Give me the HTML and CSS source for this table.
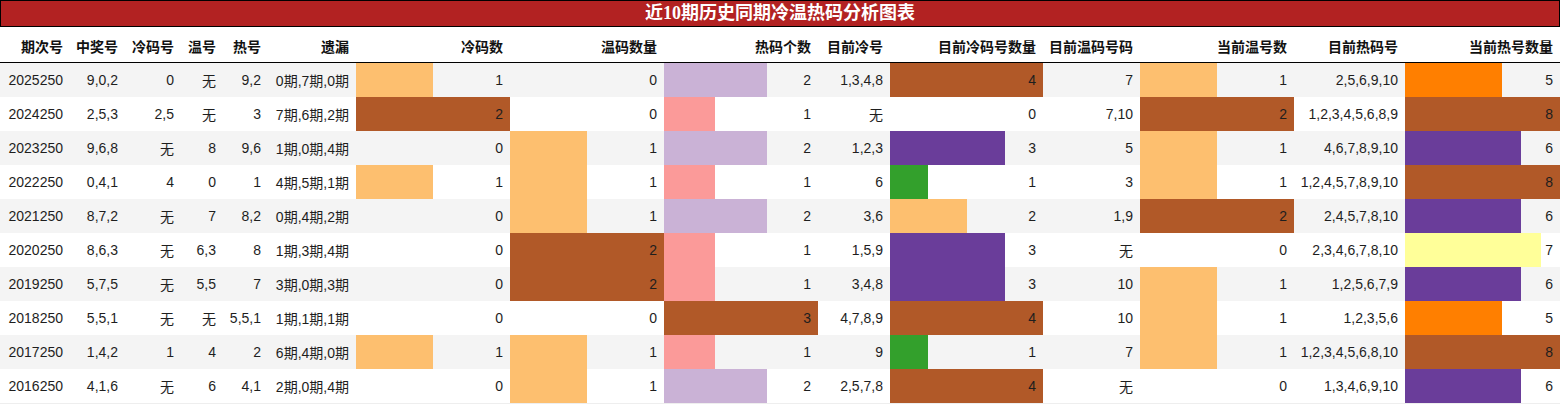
FILE: index.html
```html
<!DOCTYPE html>
<html lang="zh">
<head>
<meta charset="utf-8">
<title>近10期历史同期冷温热码分析图表</title>
<link rel="stylesheet" href="styles.css">
</head>
<body>
<div class="chart">
  <div class="title">近10期历史同期冷温热码分析图表</div>
  <table class="grid">
    <colgroup>
      <col class="w70"><col class="w55"><col class="w56"><col class="w42"><col class="w45"><col class="w88"><col class="w154"><col class="w154"><col class="w154"><col class="w72"><col class="w153"><col class="w97"><col class="w154"><col class="w111"><col class="w155">
    </colgroup>
    <thead>
      <tr>
        <th>期次号</th><th>中奖号</th><th>冷码号</th><th>温号</th><th>热号</th><th>遗漏</th><th>冷码数</th><th>温码数量</th><th>热码个数</th><th>目前冷号</th><th>目前冷码号数量</th><th>目前温码号码</th><th>当前温号数</th><th>目前热码号</th><th>当前热号数量</th>
      </tr>
    </thead>
    <tbody id="rows"></tbody>
  </table>
</div>
<script src="app.js"></script>
</body>
</html>
```
FILE: app.js
```js
var data = [
  ["2025250","9,0,2","0","无","9,2","0期,7期,0期",1,0,2,"1,3,4,8",4,"7",1,"2,5,6,9,10",5],
  ["2024250","2,5,3","2,5","无","3","7期,6期,2期",2,0,1,"无",0,"7,10",2,"1,2,3,4,5,6,8,9",8],
  ["2023250","9,6,8","无","8","9,6","1期,0期,4期",0,1,2,"1,2,3",3,"5",1,"4,6,7,8,9,10",6],
  ["2022250","0,4,1","4","0","1","4期,5期,1期",1,1,1,"6",1,"3",1,"1,2,4,5,7,8,9,10",8],
  ["2021250","8,7,2","无","7","8,2","0期,4期,2期",0,1,2,"3,6",2,"1,9",2,"2,4,5,7,8,10",6],
  ["2020250","8,6,3","无","6,3","8","1期,3期,4期",0,2,1,"1,5,9",3,"无",0,"2,3,4,6,7,8,10",7],
  ["2019250","5,7,5","无","5,5","7","3期,0期,3期",0,2,1,"3,4,8",3,"10",1,"1,2,5,6,7,9",6],
  ["2018250","5,5,1","无","无","5,5,1","1期,1期,1期",0,0,3,"4,7,8,9",4,"10",1,"1,2,3,5,6",5],
  ["2017250","1,4,2","1","4","2","6期,4期,0期",1,1,1,"9",1,"7",1,"1,2,3,4,5,6,8,10",8],
  ["2016250","4,1,6","无","6","4,1","2期,0期,4期",0,1,2,"2,5,7,8",4,"无",0,"1,3,4,6,9,10",6]
];
// column index -> {max, colour by value}
var bars = {
  6:  {max:2, c:{1:"c-lo",2:"c-br"}},
  7:  {max:2, c:{1:"c-lo",2:"c-br"}},
  8:  {max:3, c:{1:"c-pk",2:"c-lp",3:"c-br"}},
  10: {max:4, c:{1:"c-gr",2:"c-lo",3:"c-dp",4:"c-br"}},
  12: {max:2, c:{1:"c-lo",2:"c-br"}},
  14: {max:8, c:{5:"c-or",6:"c-dp",7:"c-ye",8:"c-br"}}
};
var tb = document.getElementById("rows");
var html = "";
data.forEach(function (r) {
  html += "<tr>";
  r.forEach(function (v, i) {
    var b = bars[i];
    if (b) {
      var w = (v / b.max * 100).toFixed(3);
      var cls = b.c[v] || "";
      html += '<td class="barcell"><div class="bwrap">' +
        (v > 0 ? '<div class="bar ' + cls + '" style="width:' + w + '%"></div>' : '') +
        '<span class="num">' + v + '</span></div></td>';
    } else {
      html += "<td>" + v + "</td>";
    }
  });
  html += "</tr>";
});
tb.innerHTML = html;
```
FILE: styles.css
```css
html, body {
  margin: 0;
  padding: 0;
  background: #ffffff;
}
body {
  font-family: "Liberation Sans", "Noto Sans CJK SC", sans-serif;
  font-size: 14px;
  color: #1e1e1e;
}
.chart {
  width: 1560px;
}
.title {
  height: 25px;
  border: 1px solid #000;
  background: #b22222;
  color: #fff;
  font-family: "Liberation Serif", "Noto Sans CJK SC", serif;
  font-weight: bold;
  font-size: 18px;
  line-height: 25px;
  text-align: center;
}
.grid {
  width: 1560px;
  table-layout: fixed;
  border-collapse: collapse;
  border-spacing: 0;
  border-bottom: 1px solid #eeeeee;
}
.w42 { width: 42px; }
.w45 { width: 45px; }
.w55 { width: 55px; }
.w56 { width: 56px; }
.w70 { width: 70px; }
.w72 { width: 72px; }
.w88 { width: 88px; }
.w97 { width: 97px; }
.w111 { width: 111px; }
.w153 { width: 153px; }
.w154 { width: 154px; }
.w155 { width: 155px; }
.grid th {
  height: 35px;
  padding: 3px 7px 0 0;
  box-sizing: border-box;
  text-align: right;
  font-weight: bold;
  font-size: 14px;
  color: #111;
  border-bottom: 1px solid #000;
  white-space: nowrap;
  vertical-align: middle;
}
.grid td {
  height: 34px;
  padding: 0 7px 0 0;
  box-sizing: border-box;
  text-align: right;
  white-space: nowrap;
  vertical-align: middle;
}
.grid tbody tr:nth-child(odd) td {
  background: #f4f4f4;
}
.grid td.barcell {
  padding: 0;
}
.bwrap {
  display: grid;
  height: 34px;
}
.bar {
  grid-area: 1 / 1;
  height: 34px;
}
.num {
  grid-area: 1 / 1;
  justify-self: end;
  align-self: center;
  padding-right: 7px;
}
.c-lo { background: #fdbf6f; }
.c-br { background: #b15928; }
.c-pk { background: #fb9a99; }
.c-lp { background: #cab2d6; }
.c-dp { background: #6a3d9a; }
.c-gr { background: #33a02c; }
.c-or { background: #ff7f00; }
.c-ye { background: #ffff99; }
```
